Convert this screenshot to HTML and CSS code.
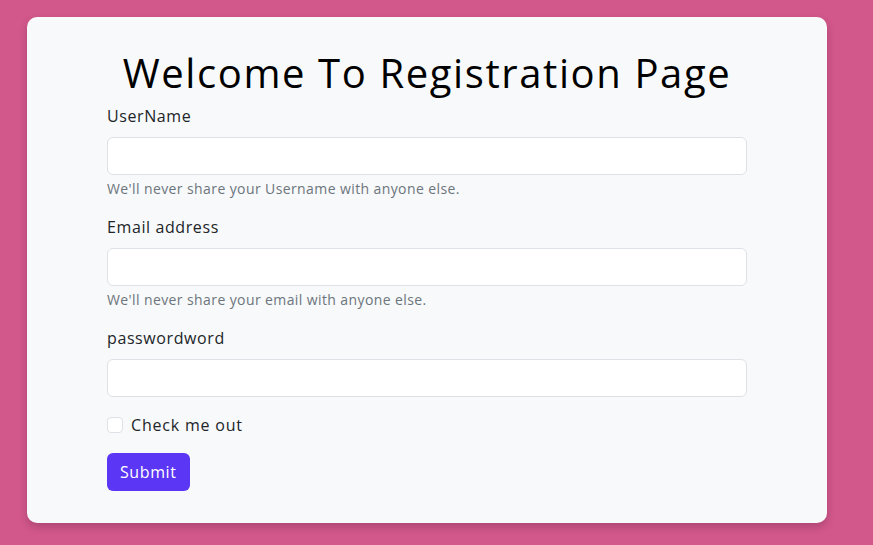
FILE: index.html
```html
<!DOCTYPE html>
<html lang="en">
<head>
<meta charset="utf-8">
<title>Registration</title>
<link rel="stylesheet" href="styles.css">
</head>
<body>
<main class="card">
  <h1 class="title">Welcome To Registration Page</h1>
  <form class="form">
    <div class="field">
      <label class="label" for="username">UserName</label>
      <input class="input" id="username" type="text">
      <div class="help">We'll never share your Username with anyone else.</div>
    </div>
    <div class="field">
      <label class="label" for="email">Email address</label>
      <input class="input" id="email" type="email">
      <div class="help">We'll never share your email with anyone else.</div>
    </div>
    <div class="field">
      <label class="label" for="password">passwordword</label>
      <input class="input" id="password" type="password">
    </div>
    <div class="field check">
      <input class="checkbox" id="check" type="checkbox">
      <label class="check-label" for="check">Check me out</label>
    </div>
    <button class="btn" type="submit">Submit</button>
  </form>
</main>
</body>
</html>
```
FILE: styles.css
```css
* { box-sizing: border-box; }
html, body { margin: 0; padding: 0; }
body {
  background: #d2578b;
  font-family: "Open Sans", "Liberation Sans", sans-serif;
  color: #212529;
  width: 873px;
  height: 545px;
  padding: 17px 0 0 27px;
}
.card {
  width: 800px;
  background: #f8f9fa;
  border-radius: 10px;
  box-shadow: 0 4px 8px rgba(0,0,0,0.18);
  padding: 25px 80px 32px;
}
.title {
  margin: 0;
  font-weight: 400;
  font-size: 40px;
  line-height: 62px;
  letter-spacing: 1.6px;
  text-align: center;
  color: #000;
}
.form { display: flex; flex-direction: column; }
.field { margin-bottom: 16px; display: flex; flex-direction: column; }
.label {
  font-size: 16px;
  line-height: 24px;
  letter-spacing: 0.6px;
  margin-bottom: 9px;
}
.input {
  height: 38px;
  border: 1px solid #dee2e6;
  border-radius: 6px;
  background: #fff;
  width: 100%;
  margin: 0;
}
.help {
  margin-top: 4px;
  font-size: 14px;
  line-height: 20px;
  letter-spacing: 0.4px;
  color: #6c757d;
}
.check { flex-direction: row; align-items: center; height: 24px; }
.checkbox {
  appearance: none;
  width: 16px;
  height: 16px;
  margin: 0 8px 0 0;
  border: 1px solid #dee2e6;
  border-radius: 4px;
  background: #fff;
}
.check-label { font-size: 16px; line-height: 24px; letter-spacing: 0.8px; }
.btn {
  align-self: flex-start;
  height: 38px;
  padding: 0 13px;
  font-family: inherit;
  font-size: 16px;
  letter-spacing: 0.6px;
  color: #fff;
  background: #5b36f5;
  border: none;
  border-radius: 6px;
}
```
